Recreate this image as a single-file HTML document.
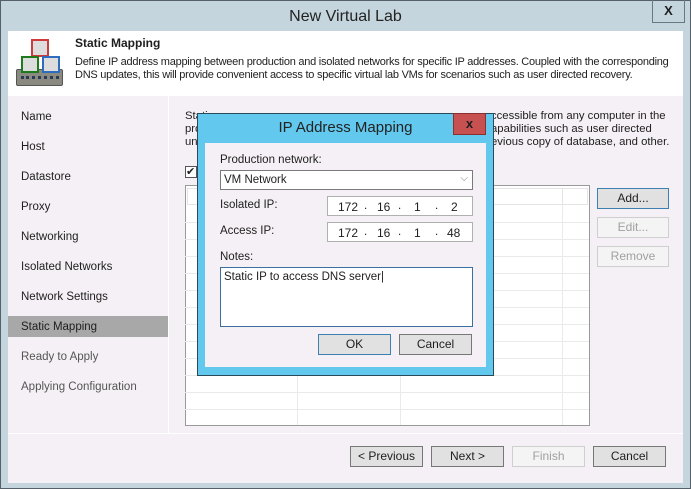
<!DOCTYPE html>
<html><head><style>
*{margin:0;padding:0;box-sizing:border-box}
body{width:691px;height:489px;position:relative;overflow:hidden;font-family:"Liberation Sans",sans-serif;font-size:11.5px;color:#1e1e1e;background:#c5d5dd}
.a{position:absolute}
.btn{position:absolute;background:#e1e1e1;border:1px solid #adadad;text-align:center;line-height:18px;font-size:12px}
.dis{color:#a0a0a0;border-color:#cfcfcf;background:#f4f4f4}
.nav{position:absolute;left:21px;font-size:11.5px}
.hl{position:absolute;left:185px;width:404px;height:1px;background:#eaeaea}
.vl{position:absolute;top:205px;width:1px;height:220px;background:#eaeaea}
</style></head><body>
<div class="a" style="left:0;top:0;width:691px;height:489px;border:1px solid #55606a"></div>
<div class="a" style="left:0;top:8px;width:691px;text-align:center;font-size:16px;color:#222">New Virtual Lab</div>
<div class="a" style="left:652px;top:0;width:33px;height:23px;border:1px solid #6b7880;border-top:none;text-align:center;font-weight:bold;font-size:13px;line-height:22px">X</div>
<div class="a" style="left:8px;top:31px;width:675px;height:452px;background:#f5f0f5"></div>
<div class="a" style="left:8px;top:31px;width:675px;height:65px;background:#fff"></div>
<!-- icon -->
<div class="a" style="left:16px;top:69px;width:47px;height:17px;background:#8a8a80;border:1px solid #555;border-radius:2px"></div>
<div class="a" style="left:21px;top:76px;width:38px;height:3px;border-top:3px dotted #2a3b55"></div>
<div class="a" style="left:31px;top:39px;width:18px;height:18px;border:2px solid #d03a3a;background:#ddd"></div>
<div class="a" style="left:21px;top:56px;width:18px;height:17px;border:2px solid #1d7a1d;background:#ddd"></div>
<div class="a" style="left:42px;top:56px;width:18px;height:17px;border:2px solid #2e6cc0;background:#ddd"></div>
<div class="a" style="left:75px;top:36px;font-weight:bold;font-size:12px">Static Mapping</div>
<div class="a" style="left:75px;top:56px;line-height:13px;font-size:11px;letter-spacing:-0.25px;white-space:nowrap">Define IP address mapping between production and isolated networks for specific IP addresses. Coupled with the corresponding<br>DNS updates, this will provide convenient access to specific virtual lab VMs for scenarios such as user directed recovery.</div>
<div class="a" style="left:168px;top:96px;width:1px;height:338px;background:#fff"></div>
<div class="a" style="left:8px;top:433px;width:675px;height:1px;background:#fff"></div>
<div class="a" style="left:8px;top:316px;width:160px;height:21px;background:#a8a8a8"></div>
<div class="nav" style="top:111px">Name</div>
<div class="nav" style="top:141px">Host</div>
<div class="nav" style="top:171px">Datastore</div>
<div class="nav" style="top:201px">Proxy</div>
<div class="nav" style="top:231px">Networking</div>
<div class="nav" style="top:261px">Isolated Networks</div>
<div class="nav" style="top:291px">Network Settings</div>
<div class="nav" style="top:321px">Static Mapping</div>
<div class="nav" style="top:351px;color:#555">Ready to Apply</div>
<div class="nav" style="top:381px;color:#555">Applying Configuration</div>
<div class="a" style="left:185px;top:110px;line-height:13px;font-size:11.3px">Stati<br>pro<br>un</div>
<div class="a" style="left:491px;top:110px;line-height:13px;font-size:11.3px;white-space:nowrap">ccessible from any computer in the<br>apabilities such as user directed<br>evious copy of database, and other.</div>
<div class="a" style="left:185px;top:166px;width:12px;height:12px;border:1px solid #555;background:#fff;font-size:11px;line-height:10px">✔</div>
<div class="a" style="left:185px;top:185px;width:405px;height:241px;border:1px solid #9a9a9a;background:#fff"></div>
<div class="a" style="left:187px;top:188px;width:401px;height:17px;border:1px solid #e4e4e4"></div>
<div class="a" style="left:562px;top:188px;width:1px;height:17px;background:#e4e4e4"></div>
<div class="hl" style="top:222px"></div><div class="hl" style="top:239px"></div><div class="hl" style="top:256px"></div><div class="hl" style="top:273px"></div><div class="hl" style="top:290px"></div><div class="hl" style="top:307px"></div><div class="hl" style="top:324px"></div><div class="hl" style="top:341px"></div><div class="hl" style="top:358px"></div><div class="hl" style="top:375px"></div><div class="hl" style="top:392px"></div><div class="hl" style="top:409px"></div>
<div class="vl" style="left:297px"></div><div class="vl" style="left:400px"></div><div class="vl" style="left:562px"></div>
<div class="btn" style="left:597px;top:188px;width:72px;height:21px;border-color:#3c7fb1">Add...</div>
<div class="btn dis" style="left:597px;top:217px;width:72px;height:21px">Edit...</div>
<div class="btn dis" style="left:597px;top:246px;width:72px;height:21px">Remove</div>
<div class="btn" style="left:350px;top:446px;width:73px;height:21px;border-color:#777">&lt; Previous</div>
<div class="btn" style="left:431px;top:446px;width:73px;height:21px;border-color:#777">Next &gt;</div>
<div class="btn dis" style="left:512px;top:446px;width:73px;height:21px">Finish</div>
<div class="btn" style="left:593px;top:446px;width:73px;height:21px;border-color:#777">Cancel</div>
<!-- dialog -->
<div class="a" style="left:197px;top:113px;width:297px;height:263px;background:#62c8ee;border:1px solid #2a4a5a"></div>
<div class="a" style="left:197px;top:119px;width:297px;text-align:center;font-size:15px;color:#222">IP Address Mapping</div>
<div class="a" style="left:453px;top:113px;width:33px;height:22px;background:#c75050;border:1px solid #8a3030;text-align:center;font-weight:bold;font-size:13px;line-height:20px">x</div>
<div class="a" style="left:205px;top:143px;width:281px;height:224px;background:#f5f0f5"></div>
<div class="a" style="left:220px;top:154px">Production network:</div>
<div class="a" style="left:220px;top:170px;width:253px;height:20px;border:1px solid #7a7a7a;background:#fff;padding:3px 3px">VM Network<span style="position:absolute;right:4px;top:2px;color:#777;font-size:10px">⌵</span></div>
<div class="a" style="left:220px;top:199px">Isolated IP:</div>
<div class="a" style="left:327px;top:196px;width:146px;height:20px;border:1px solid #b0b0b0;background:#fff"></div>
<div class="a" style="left:220px;top:225px">Access IP:</div>
<div class="a" style="left:327px;top:222px;width:146px;height:20px;border:1px solid #b0b0b0;background:#fff"></div>
<div class="a" style="left:338px;top:200px;font-size:12px">172</div><div class="a" style="left:364px;top:200px">.</div><div class="a" style="left:377px;top:200px;font-size:12px">16</div><div class="a" style="left:398px;top:200px">.</div><div class="a" style="left:414px;top:200px;font-size:12px">1</div><div class="a" style="left:435px;top:200px">.</div><div class="a" style="left:451px;top:200px;font-size:12px">2</div>
<div class="a" style="left:338px;top:226px;font-size:12px">172</div><div class="a" style="left:364px;top:226px">.</div><div class="a" style="left:377px;top:226px;font-size:12px">16</div><div class="a" style="left:398px;top:226px">.</div><div class="a" style="left:414px;top:226px;font-size:12px">1</div><div class="a" style="left:435px;top:226px">.</div><div class="a" style="left:447px;top:226px;font-size:12px">48</div>
<div class="a" style="left:220px;top:251px">Notes:</div>
<div class="a" style="left:220px;top:267px;width:253px;height:60px;border:1px solid #3c6fa0;background:#fff;padding:3px 3px">Static IP to access DNS server|</div>
<div class="btn" style="left:318px;top:334px;width:73px;height:21px;border-color:#3c7fb1">OK</div>
<div class="btn" style="left:399px;top:334px;width:73px;height:21px;border-color:#777">Cancel</div>
</body></html>
